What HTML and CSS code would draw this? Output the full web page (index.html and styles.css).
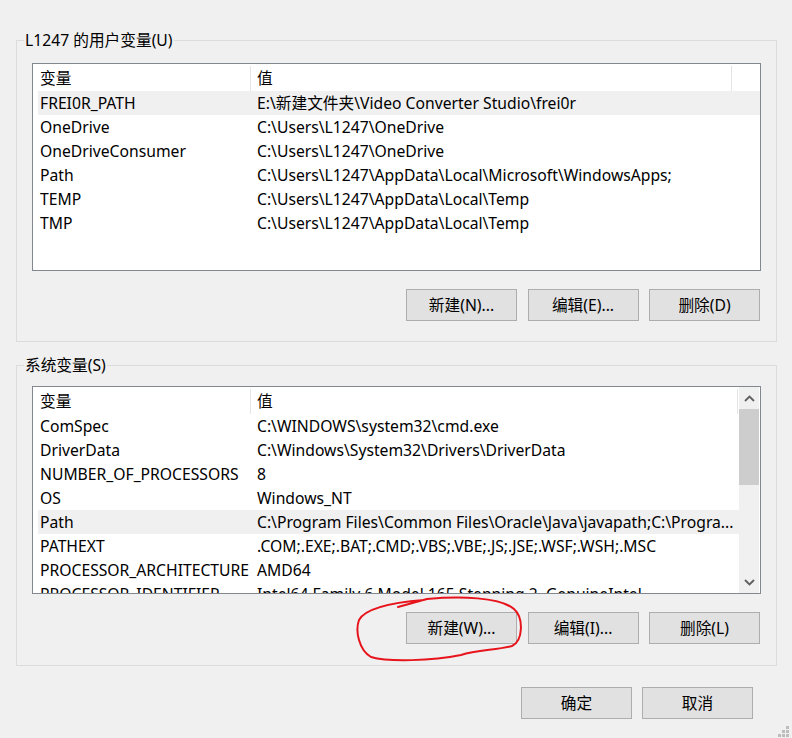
FILE: index.html
```html
<!DOCTYPE html>
<html>
<head>
  <meta charset="utf-8" />
  <title>环境变量</title>
  <link rel="stylesheet" href="styles.css">
</head>
<body>
  <div class="window">

    <fieldset class="group group-user">
      <legend>L1247 的用户变量(U)</legend>
      <div class="list">
        <div class="rows">
          <div class="head">
            <span class="cell">变量</span>
            <span class="cell">值</span>
          </div>
          <div class="row selected">
            <span class="cell">FREI0R_PATH</span>
            <span class="cell">E:\新建文件夹\Video Converter Studio\frei0r</span>
          </div>
          <div class="row">
            <span class="cell">OneDrive</span>
            <span class="cell">C:\Users\L1247\OneDrive</span>
          </div>
          <div class="row">
            <span class="cell">OneDriveConsumer</span>
            <span class="cell">C:\Users\L1247\OneDrive</span>
          </div>
          <div class="row">
            <span class="cell">Path</span>
            <span class="cell">C:\Users\L1247\AppData\Local\Microsoft\WindowsApps;</span>
          </div>
          <div class="row">
            <span class="cell">TEMP</span>
            <span class="cell">C:\Users\L1247\AppData\Local\Temp</span>
          </div>
          <div class="row">
            <span class="cell">TMP</span>
            <span class="cell">C:\Users\L1247\AppData\Local\Temp</span>
          </div>
        </div>
      </div>
      <div class="actions">
        <button class="button">新建(N)...</button>
        <button class="button">编辑(E)...</button>
        <button class="button">删除(D)</button>
      </div>
    </fieldset>

    <fieldset class="group group-system">
      <legend>系统变量(S)</legend>
      <div class="list">
        <div class="rows wide">
          <div class="head">
            <span class="cell">变量</span>
            <span class="cell">值</span>
          </div>
          <div class="row">
            <span class="cell">ComSpec</span>
            <span class="cell">C:\WINDOWS\system32\cmd.exe</span>
          </div>
          <div class="row">
            <span class="cell">DriverData</span>
            <span class="cell">C:\Windows\System32\Drivers\DriverData</span>
          </div>
          <div class="row">
            <span class="cell">NUMBER_OF_PROCESSORS</span>
            <span class="cell">8</span>
          </div>
          <div class="row">
            <span class="cell">OS</span>
            <span class="cell">Windows_NT</span>
          </div>
          <div class="row selected">
            <span class="cell">Path</span>
            <span class="cell">C:\Program Files\Common Files\Oracle\Java\javapath;C:\Progra...</span>
          </div>
          <div class="row">
            <span class="cell">PATHEXT</span>
            <span class="cell">.COM;.EXE;.BAT;.CMD;.VBS;.VBE;.JS;.JSE;.WSF;.WSH;.MSC</span>
          </div>
          <div class="row">
            <span class="cell">PROCESSOR_ARCHITECTURE</span>
            <span class="cell">AMD64</span>
          </div>
          <div class="row">
            <span class="cell">PROCESSOR_IDENTIFIER</span>
            <span class="cell">Intel64 Family 6 Model 165 Stepping 2, GenuineIntel</span>
          </div>
        </div>
        <div class="scrollbar">
          <span class="arrow">
            <svg width="11" height="7" viewBox="0 0 11 7"><path d="M1 6 L5.5 1.5 L10 6" fill="none" stroke="#606060" stroke-width="1.8"/></svg>
          </span>
          <span class="thumb"></span>
          <span class="track"></span>
          <span class="arrow">
            <svg width="11" height="7" viewBox="0 0 11 7"><path d="M1 1 L5.5 5.5 L10 1" fill="none" stroke="#606060" stroke-width="1.8"/></svg>
          </span>
        </div>
      </div>
      <div class="actions">
        <button class="button">新建(W)...</button>
        <button class="button">编辑(I)...</button>
        <button class="button">删除(L)</button>
      </div>
    </fieldset>

    <div class="footer">
      <button class="button">确定</button>
      <button class="button">取消</button>
    </div>

  </div>

  <!-- hand-drawn marker around 新建(W) -->
  <svg class="marker" width="792" height="738" viewBox="0 0 792 738">
    <path d="M398 607 L427 599 C460 596 500 597 514 609 C524 618 523 641 512 646 C497 650 477 650 461 655 C432 661 388 662 371 657 C359 650 355 631 359 620 C365 609 386 603 424 600"
          fill="none" stroke="#e8141c" stroke-width="2" stroke-linecap="round" stroke-linejoin="round"/>
  </svg>

  <svg class="grip" width="14" height="14" viewBox="0 0 14 14">
    <rect x="10" y="2" width="3" height="3" fill="#bdbdbd"/>
    <rect x="6" y="6" width="3" height="3" fill="#bdbdbd"/>
    <rect x="10" y="6" width="3" height="3" fill="#bdbdbd"/>
    <rect x="2" y="10" width="3" height="3" fill="#bdbdbd"/>
    <rect x="6" y="10" width="3" height="3" fill="#bdbdbd"/>
    <rect x="10" y="10" width="3" height="3" fill="#bdbdbd"/>
  </svg>
</body>
</html>
```

FILE: styles.css
```css
html, body {
  margin: 0;
  padding: 0;
}

body {
  position: relative;
  width: 792px;
  height: 738px;
  overflow: hidden;
  background: #f0f0f0;
  color: #000;
  font-family: "Noto Sans", "Noto Sans CJK SC", sans-serif;
  font-size: 15.7px;
}

.window {
  padding: 30px 15px 0 16px;
}

/* group boxes */
.group {
  margin: 0;
  padding: 13px 15px 20px 15px;
  border: 1px solid #dcdcdc;
  min-width: 0;
}

.group legend {
  margin-left: -8px;
  padding: 0 1px;
  line-height: 20px;
}

.group-system {
  margin-top: 13px;
  padding-top: 11px;
  padding-bottom: 21px;
}

/* list view */
.list {
  display: flex;
  height: 206px;
  background: #fff;
  border: 1px solid #828790;
  overflow: hidden;
}

.rows {
  flex: 1;
  min-width: 0;
  overflow: hidden;
  padding-left: 5px;
  --col-2: 481px;
}

.rows.wide {
  --col-2: 487px;
}

.head, .row {
  display: grid;
  grid-template-columns: 213px var(--col-2);
  white-space: nowrap;
}

.head {
  height: 27px;
  padding-top: 2px;
  box-sizing: border-box;
  line-height: 24px;
}

.head .cell {
  border-right: 1px solid #e5e5e5;
}

.row {
  height: 24px;
  line-height: 24px;
}

.cell {
  overflow: hidden;
  padding-left: 2px;
}

.cell + .cell {
  padding-left: 6px;
}

.row.selected {
  background: #f0f0f0;
}

/* scroll bar */
.scrollbar {
  display: flex;
  flex-direction: column;
  width: 20px;
  margin-right: 1px;
  background: #f0f0f0;
}

.scrollbar .arrow {
  display: flex;
  align-items: center;
  justify-content: center;
  height: 22px;
}

.scrollbar .thumb {
  height: 76px;
  background: #cdcdcd;
}

.scrollbar .track {
  flex: 1;
}

/* buttons */
.actions, .footer {
  display: flex;
  justify-content: flex-end;
  gap: 10.5px;
}

.actions {
  margin-top: 18px;
  margin-right: 1px;
}

.footer {
  margin-top: 21px;
  padding-right: 24px;
  gap: 10px;
}

.button {
  width: 111px;
  height: 32px;
  padding: 0;
  background: #e1e1e1;
  border: 1px solid #adadad;
  border-radius: 0;
  color: #000;
  font-family: inherit;
  font-size: inherit;
  line-height: 30px;
}

/* overlays */
.marker {
  position: absolute;
  left: 0;
  top: 0;
  pointer-events: none;
}

.grip {
  position: absolute;
  right: 2px;
  bottom: 0;
}
```
